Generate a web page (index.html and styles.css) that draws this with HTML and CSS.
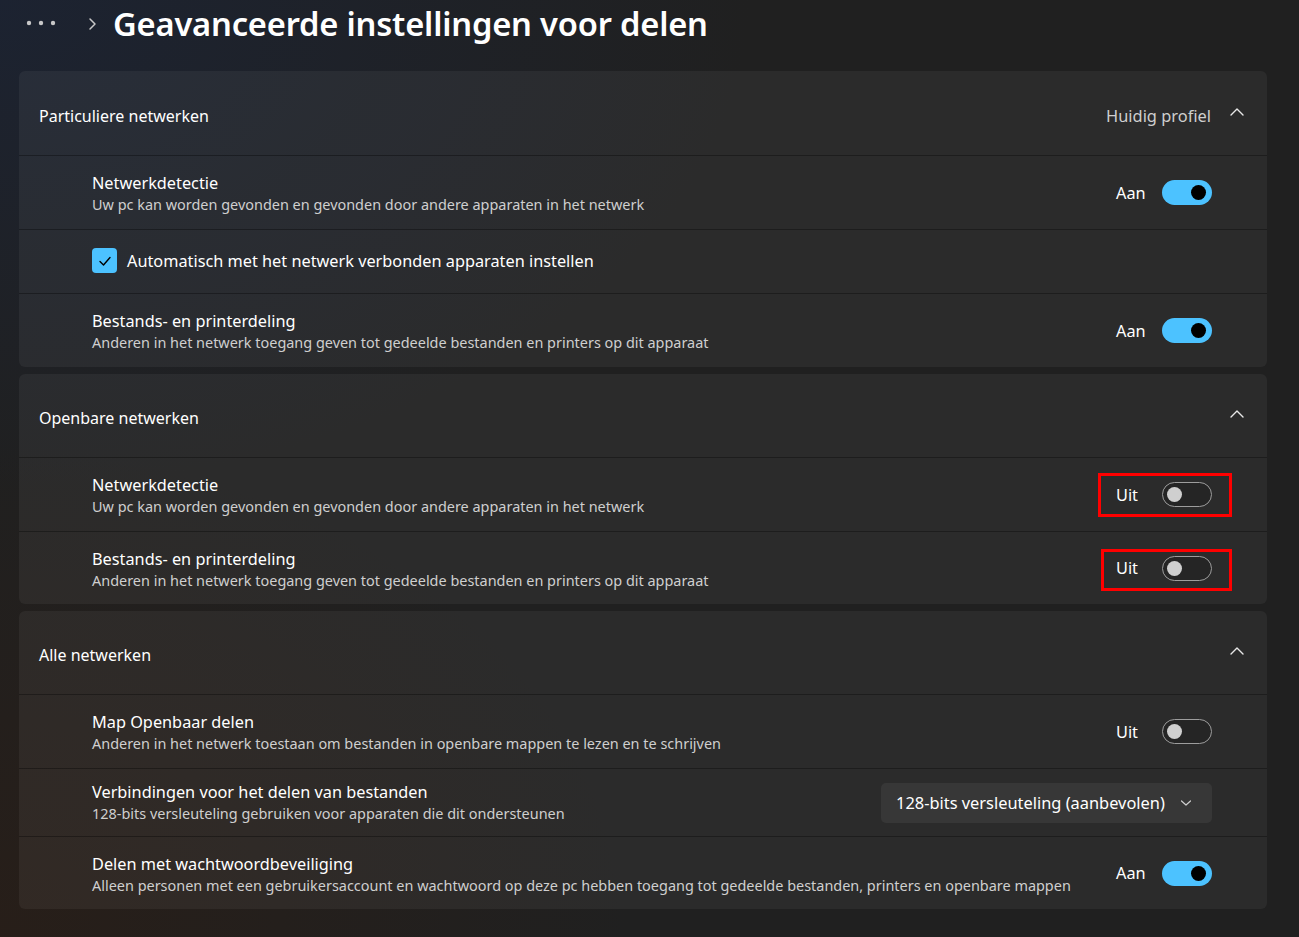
FILE: index.html
```html
<!DOCTYPE html>
<html lang="nl">
<head>
<meta charset="utf-8">
<title>Geavanceerde instellingen voor delen</title>
<link rel="stylesheet" href="styles.css">
</head>
<body>
<div class="page">
  <header class="breadcrumb">
    <svg class="dots" width="30" height="6" viewBox="0 0 30 6"><circle cx="3" cy="3" r="2.2"/><circle cx="15" cy="3" r="2.2"/><circle cx="27" cy="3" r="2.2"/></svg>
    <svg class="crumb-chev" width="10" height="14" viewBox="0 0 10 14"><path d="M3 2 L8 7 L3 12" fill="none" stroke="#c8c8c8" stroke-width="1.5" stroke-linecap="round" stroke-linejoin="round"/></svg>
    <h1 class="title">Geavanceerde instellingen voor delen</h1>
  </header>

  <main class="cards">
    <section class="card">
      <div class="card-head first">
        <span class="head-title">Particuliere netwerken</span>
        <span class="head-right">
          <span class="head-note">Huidig profiel</span>
          <svg class="chev-up" width="16" height="10" viewBox="0 0 16 10"><path d="M2 8 L8 2 L14 8" fill="none" stroke="#e8e8e8" stroke-width="1.4" stroke-linecap="round" stroke-linejoin="round"/></svg>
        </span>
      </div>
      <div class="row">
        <div class="row-text">
          <div class="row-title">Netwerkdetectie</div>
          <div class="row-desc">Uw pc kan worden gevonden en gevonden door andere apparaten in het netwerk</div>
        </div>
        <div class="control"><span class="state">Aan</span><span class="toggle on"><span class="knob"></span></span></div>
      </div>
      <div class="row row-check">
        <span class="checkbox"><svg width="14" height="12" viewBox="0 0 14 12"><path d="M2 6.5 L5.5 10 L12 2.5" fill="none" stroke="#000" stroke-width="1.4" stroke-linecap="round" stroke-linejoin="round"/></svg></span>
        <span class="row-title">Automatisch met het netwerk verbonden apparaten instellen</span>
      </div>
      <div class="row">
        <div class="row-text">
          <div class="row-title">Bestands- en printerdeling</div>
          <div class="row-desc">Anderen in het netwerk toegang geven tot gedeelde bestanden en printers op dit apparaat</div>
        </div>
        <div class="control"><span class="state">Aan</span><span class="toggle on"><span class="knob"></span></span></div>
      </div>
    </section>

    <section class="card">
      <div class="card-head">
        <span class="head-title">Openbare netwerken</span>
        <span class="head-right">
          <svg class="chev-up" width="16" height="10" viewBox="0 0 16 10"><path d="M2 8 L8 2 L14 8" fill="none" stroke="#e8e8e8" stroke-width="1.4" stroke-linecap="round" stroke-linejoin="round"/></svg>
        </span>
      </div>
      <div class="row">
        <div class="row-text">
          <div class="row-title">Netwerkdetectie</div>
          <div class="row-desc">Uw pc kan worden gevonden en gevonden door andere apparaten in het netwerk</div>
        </div>
        <div class="control marked mark-a"><span class="state">Uit</span><span class="toggle off"><span class="knob"></span></span></div>
      </div>
      <div class="row row-last">
        <div class="row-text">
          <div class="row-title">Bestands- en printerdeling</div>
          <div class="row-desc">Anderen in het netwerk toegang geven tot gedeelde bestanden en printers op dit apparaat</div>
        </div>
        <div class="control marked mark-b"><span class="state">Uit</span><span class="toggle off"><span class="knob"></span></span></div>
      </div>
    </section>

    <section class="card">
      <div class="card-head">
        <span class="head-title">Alle netwerken</span>
        <span class="head-right">
          <svg class="chev-up" width="16" height="10" viewBox="0 0 16 10"><path d="M2 8 L8 2 L14 8" fill="none" stroke="#e8e8e8" stroke-width="1.4" stroke-linecap="round" stroke-linejoin="round"/></svg>
        </span>
      </div>
      <div class="row">
        <div class="row-text">
          <div class="row-title">Map Openbaar delen</div>
          <div class="row-desc">Anderen in het netwerk toestaan om bestanden in openbare mappen te lezen en te schrijven</div>
        </div>
        <div class="control"><span class="state">Uit</span><span class="toggle off"><span class="knob"></span></span></div>
      </div>
      <div class="row row-drop">
        <div class="row-text">
          <div class="row-title">Verbindingen voor het delen van bestanden</div>
          <div class="row-desc">128-bits versleuteling gebruiken voor apparaten die dit ondersteunen</div>
        </div>
        <div class="dropdown">
          <span>128-bits versleuteling (aanbevolen)</span>
          <svg width="12" height="8" viewBox="0 0 12 8"><path d="M1.5 2 L6 6 L10.5 2" fill="none" stroke="#cfcfcf" stroke-width="1.2" stroke-linecap="round" stroke-linejoin="round"/></svg>
        </div>
      </div>
      <div class="row row-last">
        <div class="row-text">
          <div class="row-title">Delen met wachtwoordbeveiliging</div>
          <div class="row-desc">Alleen personen met een gebruikersaccount en wachtwoord op deze pc hebben toegang tot gedeelde bestanden, printers en openbare mappen</div>
        </div>
        <div class="control"><span class="state">Aan</span><span class="toggle on"><span class="knob"></span></span></div>
      </div>
    </section>
  </main>
</div>
</body>
</html>
```

FILE: styles.css
```css
html, body {
  margin: 0;
  height: 100%;
}
body {
  font-family: "Noto Sans", "Open Sans", sans-serif;
  color: #ffffff;
  background:
    radial-gradient(ellipse 1000px 650px at 0% 0%, rgba(28, 35, 50, 0.95), rgba(28, 35, 50, 0) 75%),
    radial-gradient(ellipse 900px 700px at 0% 100%, rgba(40, 30, 24, 0.9), rgba(40, 30, 24, 0) 70%),
    #202020;
  overflow: hidden;
}
.page {
  padding: 0 32px 0 19px;
}
.breadcrumb {
  display: flex;
  align-items: center;
  height: 50px;
}
.dots {
  fill: #c8c8c8;
  margin-left: 7px;
  margin-top: -4px;
}
.crumb-chev {
  margin-left: 31px;
  margin-top: -2px;
}
.title {
  margin: -2px 0 0 16px;
  font-size: 32.7px;
  font-weight: 600;
  letter-spacing: -0.2px;
  line-height: 50px;
}
.cards {
  margin-top: 21px;
  width: 1248px;
  display: flex;
  flex-direction: column;
  gap: 7px;
}
.card {
  background: rgba(255, 255, 255, 0.05);
  border-radius: 6px;
  overflow: hidden;
}
.card-head {
  height: 83px;
  display: flex;
  align-items: center;
  justify-content: space-between;
  padding: 0 22px 0 20px;
  box-sizing: border-box;
}
.card-head.first {
  height: 84px;
}
.head-title {
  font-size: 16px;
  padding-top: 5px;
}
.head-right {
  display: flex;
  align-items: center;
  gap: 18px;
}
.head-note {
  font-size: 16.4px;
  color: #cfcfcf;
  padding-top: 5px;
}
.chev-up {
  margin-top: -3px;
}
.row {
  display: flex;
  align-items: center;
  justify-content: space-between;
  min-height: 74px;
  box-sizing: border-box;
  padding: 3px 55px 0 73px;
  border-top: 1px solid rgba(0, 0, 0, 0.32);
}
.row-last {
  min-height: 73px;
}
.row-check {
  min-height: 64px;
  justify-content: flex-start;
  gap: 10px;
  padding-top: 0;
  padding-bottom: 2px;
}
.row-drop {
  min-height: 68px;
  padding-top: 0;
}
.row-title {
  font-size: 16.3px;
  line-height: 22px;
}
.row-desc {
  font-size: 14.45px;
  line-height: 22px;
  color: #cfcfcf;
}
.control {
  display: flex;
  align-items: center;
  gap: 16px;
  position: relative;
  margin-top: -3px;
}
.state {
  font-size: 16.3px;
  width: 30px;
}
.toggle {
  width: 50px;
  height: 25px;
  border-radius: 13px;
  box-sizing: border-box;
  display: flex;
  align-items: center;
  position: relative;
}
.toggle.on {
  background: #4cc2ff;
  justify-content: flex-end;
  padding-right: 6px;
}
.toggle.on .knob {
  width: 15px;
  height: 15px;
  border-radius: 50%;
  background: #000;
}
.toggle.off {
  border: 1px solid #9d9d9d;
  background: rgba(0, 0, 0, 0.12);
  padding-left: 4px;
}
.toggle.off .knob {
  width: 15px;
  height: 15px;
  border-radius: 50%;
  background: #cfcfcf;
}
.marked::after {
  content: "";
  position: absolute;
  border: 3px solid #ff0000;
  box-sizing: border-box;
}
.mark-a::after {
  left: -18px;
  right: -20px;
  top: -9px;
  bottom: -10px;
}
.mark-b::after {
  left: -15px;
  right: -20px;
  top: -7px;
  bottom: -10px;
}
.checkbox {
  width: 25px;
  height: 25px;
  border-radius: 4px;
  background: #4cc2ff;
  display: flex;
  align-items: center;
  justify-content: center;
}
.dropdown {
  width: 331px;
  height: 40px;
  box-sizing: border-box;
  border-radius: 5px;
  background: rgba(255, 255, 255, 0.06);
  display: flex;
  align-items: center;
  justify-content: space-between;
  padding: 0 20px 0 15px;
  font-size: 16.4px;
}
```
